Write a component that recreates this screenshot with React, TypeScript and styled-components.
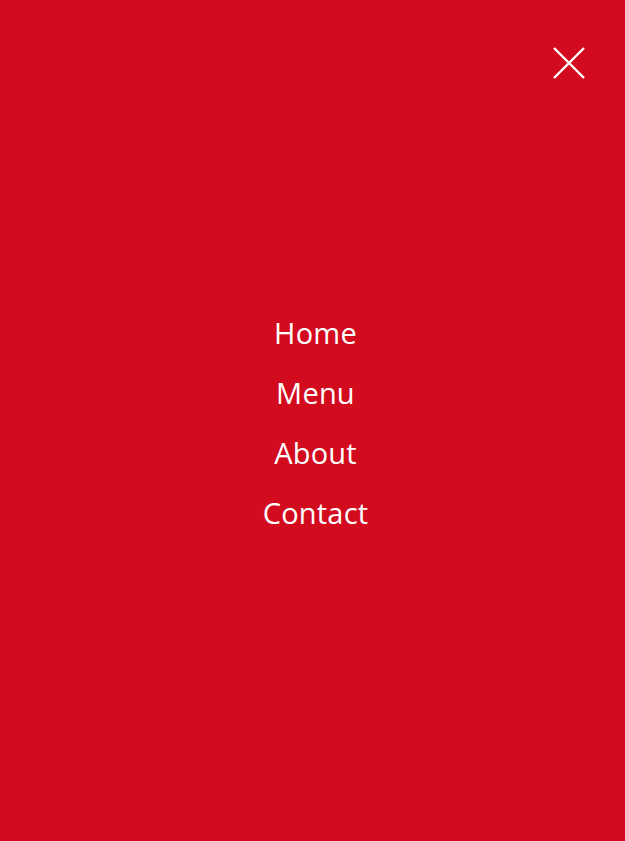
import React from "react";
import styled, { createGlobalStyle } from "styled-components";

const Global = createGlobalStyle`
  html, body { margin: 0; padding: 0; }
  body { background: #d20b1f; }
`;

const Overlay = styled.div`
  position: relative;
  width: 625px;
  height: 841px;
  box-sizing: border-box;
  padding-left: 6px;
  background: #d20b1f;
  display: flex;
  align-items: center;
  justify-content: center;
  font-family: "Open Sans", "Noto Sans", sans-serif;
`;

const CloseButton = styled.button`
  position: absolute;
  top: 46px;
  right: 39px;
  width: 34px;
  height: 34px;
  padding: 0;
  border: none;
  background: transparent;
  cursor: pointer;
  display: flex;
  align-items: center;
  justify-content: center;
`;

const Nav = styled.nav`
  display: flex;
  flex-direction: column;
  align-items: center;
  margin-top: 5px;
`;

const NavLink = styled.a`
  display: block;
  color: #ffffff;
  font-size: 29px;
  line-height: 60px;
  text-decoration: none;
  letter-spacing: 0.2px;
`;

export default function App() {
  return (
    <>
      <Global />
      <Overlay>
        <CloseButton aria-label="Close menu">
          <svg width="34" height="34" viewBox="0 0 34 34">
            <path d="M2 2 L32 32 M32 2 L2 32" stroke="#fff" strokeWidth="2.4" fill="none" />
          </svg>
        </CloseButton>
        <Nav>
          <NavLink href="#">Home</NavLink>
          <NavLink href="#">Menu</NavLink>
          <NavLink href="#">About</NavLink>
          <NavLink href="#">Contact</NavLink>
        </Nav>
      </Overlay>
    </>
  );
}
